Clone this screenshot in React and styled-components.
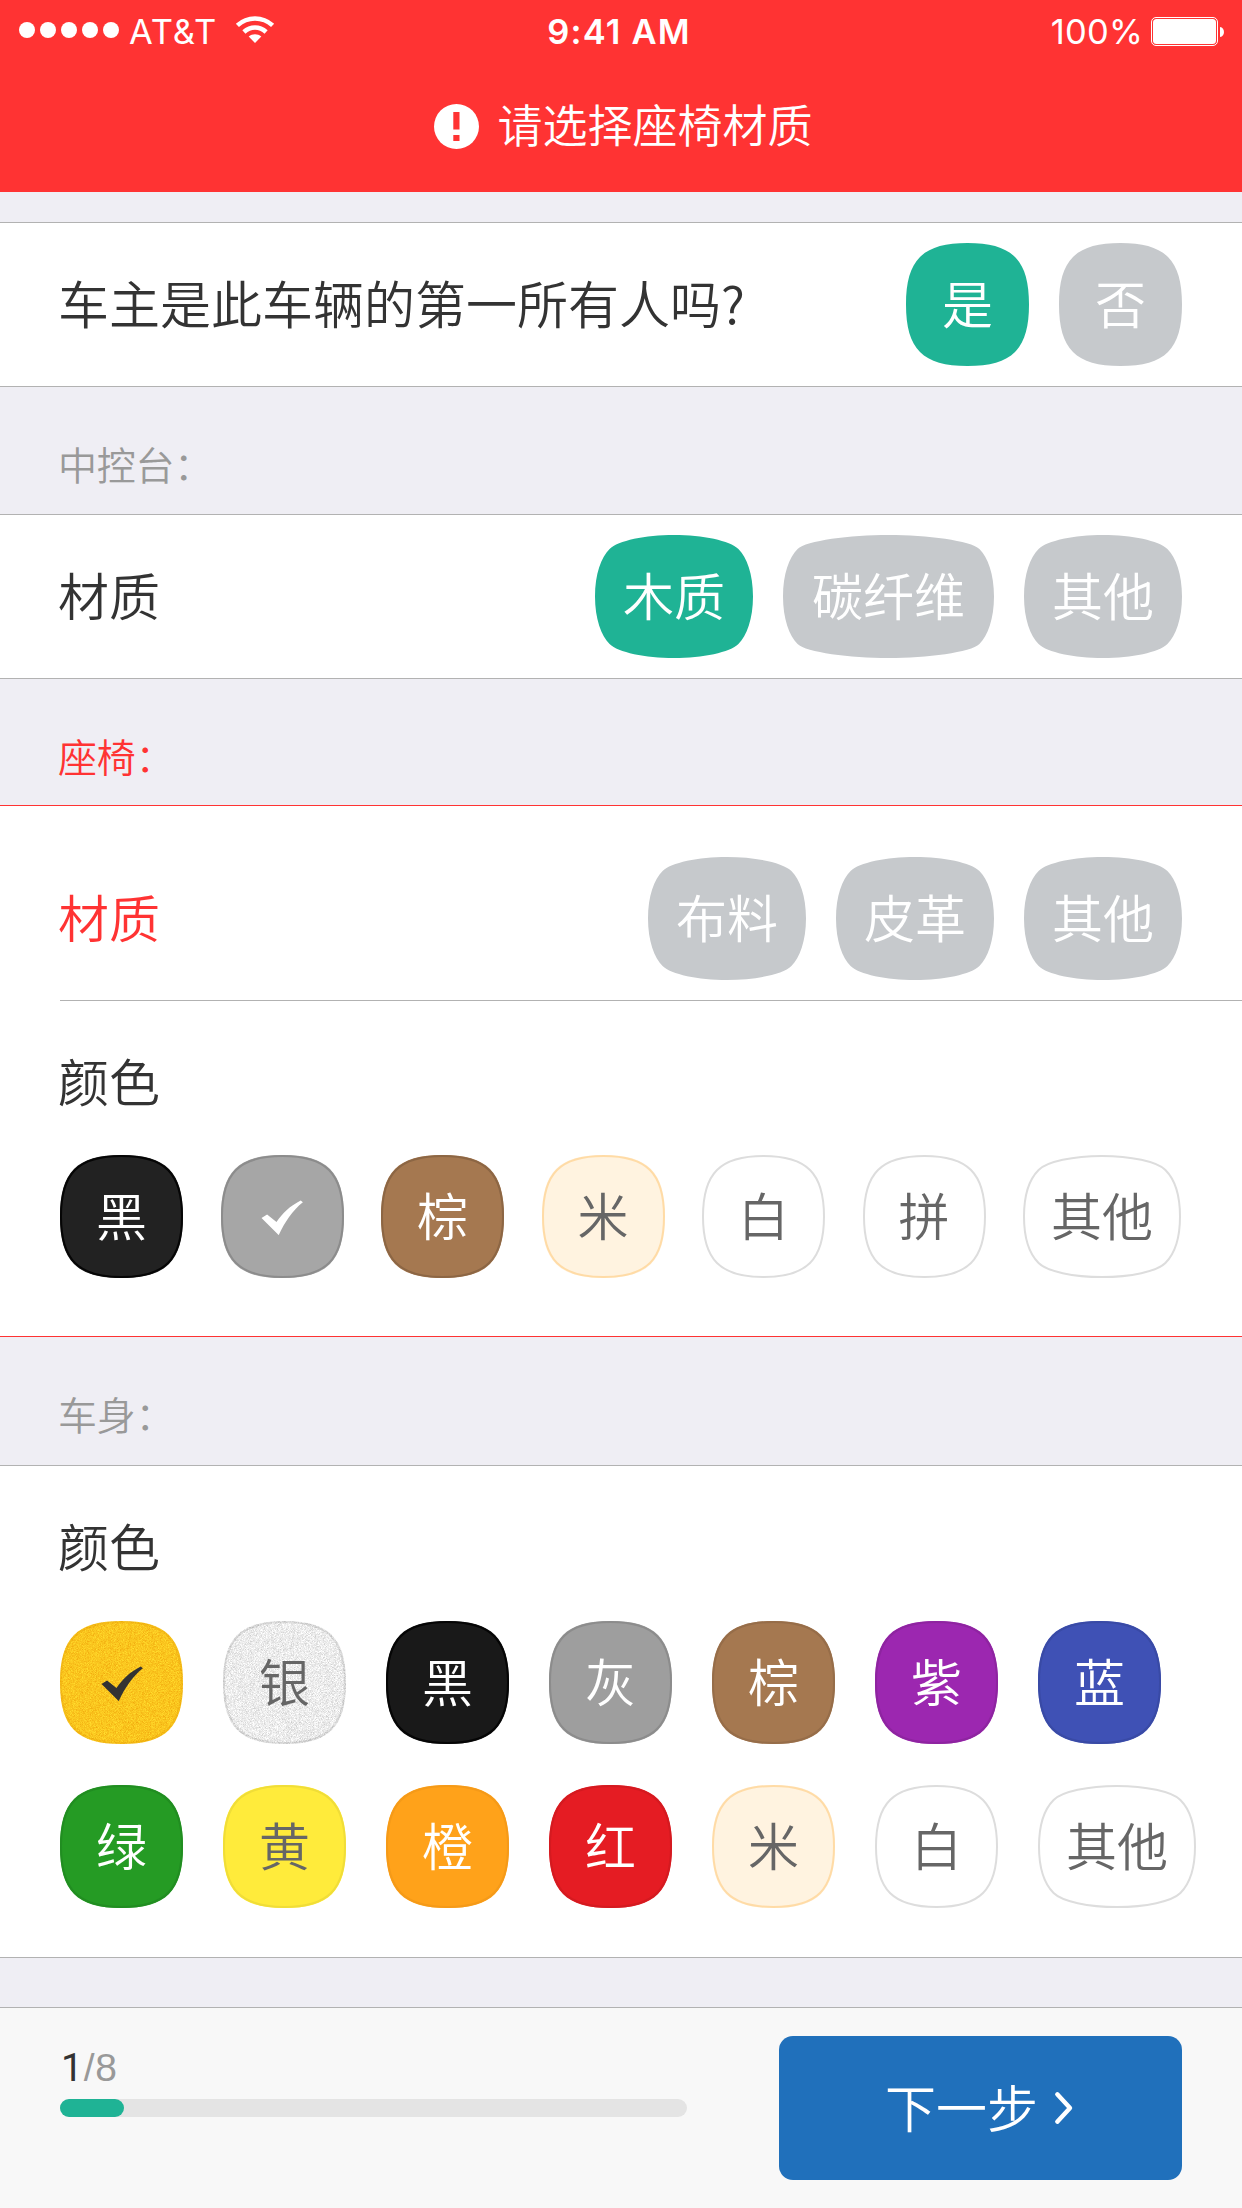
import React from "react";
import styled, { createGlobalStyle } from "styled-components";

const GlobalStyle = createGlobalStyle`
  * { box-sizing: border-box; }
  body {
    margin: 0;
    background: #efeef4;
    font-family: "Noto Sans CJK SC", sans-serif;
    font-weight: 350;
  }
`;

const Screen = styled.div`
  width: 1242px;
  height: 2208px;
  display: flex;
  flex-direction: column;
  background: #efeef4;
  overflow: hidden;
`;

const Header = styled.header`
  height: 192px;
  flex: none;
  background: #ff3333;
  color: #fff;
  margin-bottom: 30px;
`;

const StatusBar = styled.div`
  height: 60px;
  display: grid;
  grid-template-columns: 1fr auto 1fr;
  align-items: center;
  padding: 2px 17px 0 19px;
  font-family: Inter, sans-serif;
  font-size: 34.5px;
  font-weight: 400;
`;

const StatusLeft = styled.div`
  display: flex;
  align-items: center;
`;

const StatusRight = styled(StatusLeft)`
  justify-content: flex-end;
  gap: 8px;
`;

const Signal = styled.div`
  display: flex;
  gap: 5px;
  margin: 0 10px 2px 0;
`;

const Dot = styled.i`
  width: 16px;
  height: 16px;
  border-radius: 50%;
  background: #fff;
`;

const WifiIcon = styled.svg`
  margin: 0 0 3px 18px;
`;

const Carrier = styled.span`
  letter-spacing: 0.9px;
`;

const Charge = styled.span`
  letter-spacing: 0.2px;
`;

const Clock = styled.span`
  font-weight: 600;
  letter-spacing: 1.2px;
  margin-right: 6px;
`;

const Alert = styled.div`
  height: 132px;
  display: flex;
  justify-content: center;
  align-items: center;
  gap: 18px;
  padding-left: 5px;
  font-size: 45px;
  line-height: 60px;
`;

const AlertText = styled.span`
  margin-top: -4px;
`;

const line = (p) => (p.$error ? "#f33" : "#b2b2b2");

const Panel = styled.section`
  flex: none;
  height: ${(p) => p.$height}px;
  background: #fff;
  border-top: 1px solid ${line};
  border-bottom: 1px solid ${line};
`;

const PanelTitle = styled.h2`
  flex: none;
  height: ${(p) => p.$height}px;
  margin: 0;
  padding: 47px 0 0 58px;
  font-size: 39px;
  line-height: 58px;
  font-weight: inherit;
  letter-spacing: -0.3px;
  color: ${(p) => (p.$error ? "#f33" : "#999")};
`;

const Row = styled.div`
  display: flex;
  align-items: center;
  justify-content: space-between;
  height: ${(p) => p.$height || 163}px;
  margin-left: 60px;
  padding: ${(p) => p.$top || 0}px 60px 0 0;
  border-bottom: ${(p) => (p.$divided ? "1px solid #b2b2b2" : "none")};
`;

const Label = styled.div`
  font-size: 51px;
  line-height: 72px;
  margin: -6px 0 0 -2px;
  color: ${(p) => (p.$error ? "#f33" : "#333")};
`;

const Options = styled.div`
  display: flex;
  gap: 30px;
`;

const ColorBlock = styled.div`
  padding: 49px 0 0 60px;
`;

const SpreadColors = styled.div`
  display: flex;
  justify-content: space-between;
  width: 1121px;
  margin-top: 39px;
`;

const GridColors = styled.div`
  display: grid;
  grid-template-columns: repeat(6, 123px) 158px;
  gap: 41px 40px;
  margin-top: 40px;
`;

const PillButton = styled.button`
  display: grid;
  width: ${(p) => p.$width}px;
  height: 123px;
  padding: 0;
  border: 0;
  background: none;
  color: ${(p) => p.$color};
  font: inherit;
  font-size: 51px;
  line-height: 72px;
  place-items: center;
  > * { grid-area: 1 / 1; }
`;

const PillShape = styled.svg`
  display: block;
`;

const PillText = styled.span`
  margin-top: -5px;
`;

const Footer = styled.footer`
  flex: none;
  height: 201px;
  margin-top: 49px;
  border-top: 1px solid #b2b2b2;
  background: #f8f8f8;
  display: flex;
  justify-content: space-between;
  align-items: flex-start;
  padding: 28px 60px 0;
`;

const Progress = styled.div`
  width: 627px;
  padding-top: 10px;
`;

const Count = styled.div`
  font-family: "Liberation Sans", Arial, sans-serif;
  font-size: 39px;
  line-height: 44px;
  letter-spacing: 0.8px;
  padding-left: 1px;
  color: #999;
`;

const Current = styled.span`
  font-family: Roboto, sans-serif;
  font-weight: 400;
  color: #333;
`;

const Track = styled.div`
  height: 18px;
  margin-top: 9px;
  border-radius: 9px;
  background: #e4e4e4;
`;

const Fill = styled.div`
  width: 64px;
  height: 18px;
  border-radius: 9px;
  background: #1fb395;
`;

const NextButton = styled.button`
  width: 403px;
  height: 144px;
  display: flex;
  align-items: center;
  justify-content: center;
  gap: 16px;
  border: 0;
  padding: 0 2px 0 0;
  border-radius: 14px;
  background: #2070bb;
  color: #fff;
  font: inherit;
  font-size: 51px;
  line-height: 72px;
`;

const NextText = styled.span`
  margin-top: -5px;
`;

/* Closed outline of a squircle: the corners keep one size, the sides bow outwards. */
function squircle(w, h, o) {
  const k = w > 130 ? 8.4 : 9.8;
  const m = w > 130 ? 14.6 : 14;
  const n = 14;
  const l = o;
  const t = o;
  const r = w - o;
  const b = h - o;
  const cx = w / 2;
  const cy = h / 2;
  const ax = cx * 0.637;
  const ay = cy * 0.637;
  return [
    `M${cx} ${t}`,
    `C${w - ax} ${t} ${r - m - k} ${t + n - k} ${r - m} ${t + n}`,
    `C${r - m + k} ${t + n + k} ${r} ${ay} ${r} ${cy}`,
    `C${r} ${h - ay} ${r - m + k} ${b - n - k} ${r - m} ${b - n}`,
    `C${r - m - k} ${b - n + k} ${w - ax} ${b} ${cx} ${b}`,
    `C${ax} ${b} ${l + m + k} ${b - n + k} ${l + m} ${b - n}`,
    `C${l + m - k} ${b - n - k} ${l} ${h - ay} ${l} ${cy}`,
    `C${l} ${ay} ${l + m - k} ${t + n + k} ${l + m} ${t + n}`,
    `C${l + m + k} ${t + n - k} ${ax} ${t} ${cx} ${t}Z`,
  ].join("");
}

function Check() {
  return (
    <svg width="42" height="36" viewBox="40.5 43.5 42 36" fill="currentColor">
      <path d="M41 62.6L46.6 59L56 66.6C62 57.5 69.5 50.5 80.2 45L82.4 46.8C71.5 55.5 64.5 66.5 58.2 79.6Z" />
    </svg>
  );
}

function Pill({ text, fill = "#c6c9cc", edge, color = "#fff", checked, noise }) {
  const width = [0, 123, 158, 211][text.length];
  return (
    <PillButton $width={width} $color={color} aria-label={text}>
      <PillShape width={width} height="123">
        {noise && (
          <filter id={noise} x="0" y="0" width="100%" height="100%" colorInterpolationFilters="sRGB">
            <feTurbulence type="fractalNoise" baseFrequency="1.37" numOctaves="3" seed="4" />
            <feColorMatrix
              values={
                noise === "gold"
                  ? "0.1 0 0 0 0.93  0.32 0 0 0 0.615  0.2 0 0 0 0.02  0 0 0 0 1"
                  : "0.36 0 0 0 0.745  0.36 0 0 0 0.745  0.36 0 0 0 0.745  0 0 0 0 1"
              }
            />
            <feComposite in2="SourceGraphic" operator="in" />
          </filter>
        )}
        <path d={squircle(width, 123, 0)} fill={fill} filter={noise ? `url(#${noise})` : undefined} />
        {edge && <path d={squircle(width, 123, 1)} fill="none" stroke={edge} strokeWidth="2" />}
      </PillShape>
      {checked ? <Check /> : <PillText>{text}</PillText>}
    </PillButton>
  );
}

const seatColors = [
  { text: "黑", fill: "#222", edge: "#050505" },
  { text: "灰", fill: "#a6a6a6", edge: "#8c8c8c", checked: true },
  { text: "棕", fill: "#a57850", edge: "#8c6644" },
  { text: "米", fill: "#fff3e0", edge: "#ffdba6", color: "#666" },
  { text: "白", fill: "#fff", edge: "#ddd", color: "#666" },
  { text: "拼", fill: "#fff", edge: "#ddd", color: "#666" },
  { text: "其他", fill: "#fff", edge: "#ddd", color: "#666" },
];

const bodyColors = [
  { text: "金", fill: "#fdc820", edge: "rgba(225,150,0,.28)", color: "#333", checked: true, noise: "gold" },
  { text: "银", fill: "#ececec", edge: "rgba(0,0,0,.1)", color: "#666", noise: "silver" },
  { text: "黑", fill: "#191919", edge: "#050505" },
  { text: "灰", fill: "#9e9e9e", edge: "#8c8c8c" },
  { text: "棕", fill: "#a57850", edge: "#966d49" },
  { text: "紫", fill: "#9c27b0", edge: "#8e24a0" },
  { text: "蓝", fill: "#3f51b5", edge: "#394aa5" },
  { text: "绿", fill: "#259b24", edge: "#218d21" },
  { text: "黄", fill: "#ffeb3b", edge: "#f0dd38", color: "#666" },
  { text: "橙", fill: "#ffa21a", edge: "#f59a18" },
  { text: "红", fill: "#e51c23", edge: "#d41a20" },
  { text: "米", fill: "#fff3e0", edge: "#ffdba6", color: "#666" },
  { text: "白", fill: "#fff", edge: "#ddd", color: "#666" },
  { text: "其他", fill: "#fff", edge: "#ddd", color: "#666" },
];

export default function App() {
  return (
    <Screen>
      <GlobalStyle />
      <Header>
        <StatusBar>
          <StatusLeft>
            <Signal>
              <Dot /><Dot /><Dot /><Dot /><Dot />
            </Signal>
            <Carrier>AT&amp;T</Carrier>
            <WifiIcon width="40" height="28" viewBox="0 0 40 28" fill="none" stroke="#fff" strokeWidth="4.6">
              <path d="M2.4 9.4C12.5 0.2 27.5 0.2 37.6 9.4" />
              <path d="M8.9 16C15.5 10 24.5 10 31.1 16" />
              <path d="M13.7 20.6C17.3 17.4 22.7 17.4 26.3 20.6L20 27Z" fill="#fff" stroke="none" />
            </WifiIcon>
          </StatusLeft>
          <Clock>9:41 AM</Clock>
          <StatusRight>
            <Charge>100%</Charge>
            <svg width="74" height="29" viewBox="0 0 74 29">
              <rect x="0.5" y="0.5" width="66" height="28" rx="4.5" fill="none" stroke="#fff" />
              <rect x="2" y="2" width="63" height="25" rx="3.5" fill="#fff" />
              <path d="M69 10C74.3 10.5 74.3 19.5 69 20Z" fill="#fff" />
            </svg>
          </StatusRight>
        </StatusBar>
        <Alert>
          <svg width="45" height="45" viewBox="0 0 45 45">
            <circle cx="22.5" cy="22.5" r="22.5" fill="#fff" />
            <path d="M19.3 8H25.5V25.5H19.3ZM19.3 31H25.5V37H19.3Z" fill="#f33" />
          </svg>
          <AlertText>请选择座椅材质</AlertText>
        </Alert>
      </Header>

      <Panel $height={165}>
        <Row>
          <Label>车主是此车辆的第一所有人吗?</Label>
          <Options>
            <Pill text="是" fill="#1fb395" />
            <Pill text="否" />
          </Options>
        </Row>
      </Panel>

      <PanelTitle $height={127}>中控台：</PanelTitle>
      <Panel $height={165}>
        <Row>
          <Label>材质</Label>
          <Options>
            <Pill text="木质" fill="#1fb395" />
            <Pill text="碳纤维" />
            <Pill text="其他" />
          </Options>
        </Row>
      </Panel>

      <PanelTitle $height={126} $error>座椅：</PanelTitle>
      <Panel $height={532} $error>
        <Row $height={195} $top={31} $divided>
          <Label $error>材质</Label>
          <Options>
            <Pill text="布料" />
            <Pill text="皮革" />
            <Pill text="其他" />
          </Options>
        </Row>
        <ColorBlock>
          <Label>颜色</Label>
          <SpreadColors>
            {seatColors.map((c) => <Pill key={c.text} {...c} />)}
          </SpreadColors>
        </ColorBlock>
      </Panel>

      <PanelTitle $height={128}>车身：</PanelTitle>
      <Panel $height={493}>
        <ColorBlock>
          <Label>颜色</Label>
          <GridColors>
            {bodyColors.map((c) => <Pill key={c.text} {...c} />)}
          </GridColors>
        </ColorBlock>
      </Panel>

      <Footer>
        <Progress>
          <Count><Current>1</Current>/8</Count>
          <Track><Fill /></Track>
        </Progress>
        <NextButton>
          <NextText>下一步</NextText>
          <svg width="20" height="34" viewBox="0 0 20 34" fill="none" stroke="#fff" strokeWidth="4.4" strokeLinecap="round" strokeLinejoin="round">
            <path d="M3.3 3.3L16 17L3.3 30.7" />
          </svg>
        </NextButton>
      </Footer>
    </Screen>
  );
}
